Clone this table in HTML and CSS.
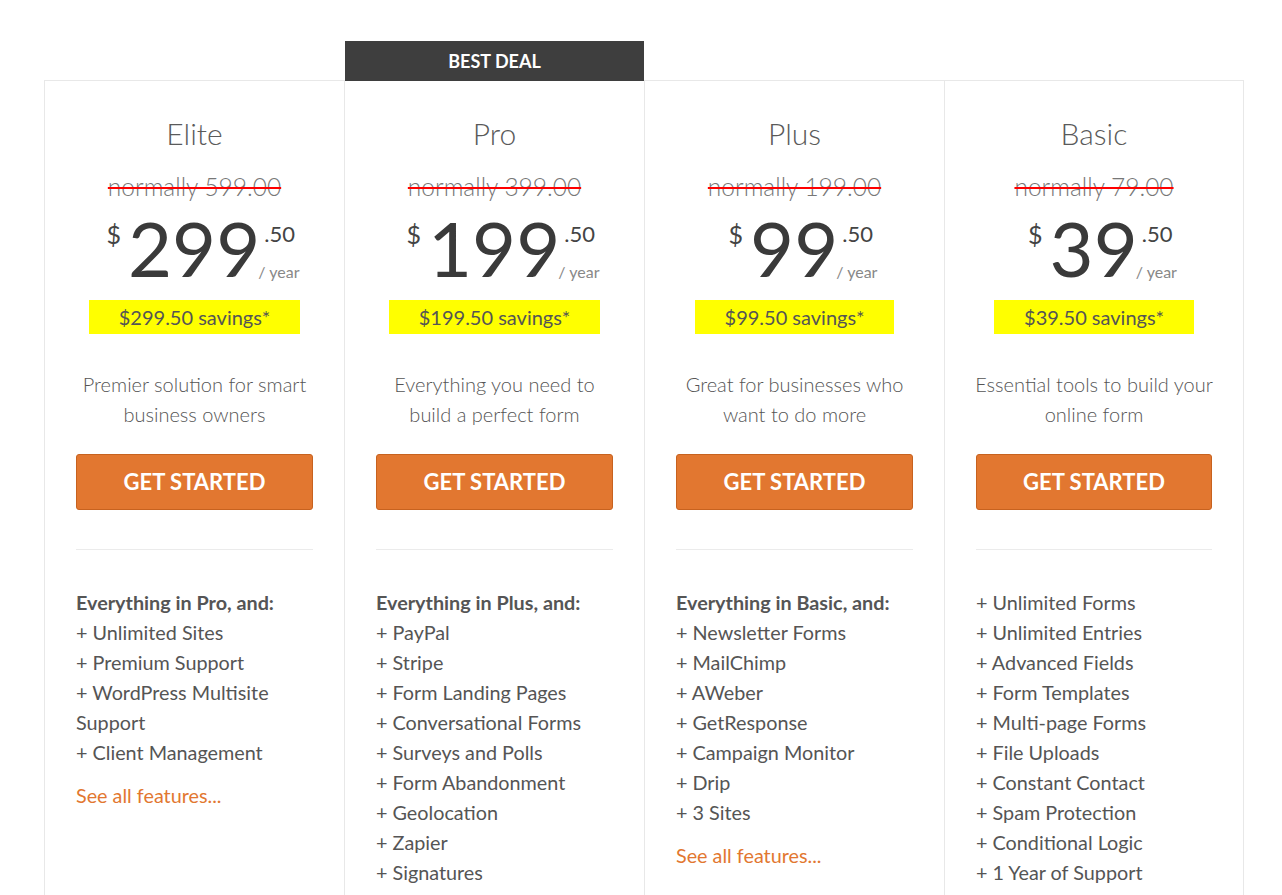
FILE: index.html
```html
<!DOCTYPE html>
<html lang="en">
<head>
<meta charset="utf-8">
<title>Pricing</title>
<link rel="stylesheet" href="styles.css">
</head>
<body>
<div class="page">
  <div class="plans">
    <div class="plan">
      <h2 class="plan-name">Elite</h2>
      <div class="normally"><span class="strike">normally 599.00</span></div>
      <div class="price">
        <span class="currency">$</span>
        <span class="amount">299</span>
        <span class="side"><span class="cents">.50</span><span class="per">/ year</span></span>
      </div>
      <div class="savings-wrap"><span class="savings">$299.50 savings*</span></div>
      <p class="desc">Premier solution for smart business owners</p>
      <a class="btn" href="#">GET STARTED</a>
      <hr class="sep">
      <ul class="features">
        <li class="head">Everything in Pro, and:</li>
        <li>+ Unlimited Sites</li>
        <li>+ Premium Support</li>
        <li>+ WordPress Multisite Support</li>
        <li>+ Client Management</li>
      </ul>
      <a class="more" href="#">See all features...</a>
    </div>
    <div class="plan featured">
      <div class="ribbon">BEST DEAL</div>
      <h2 class="plan-name">Pro</h2>
      <div class="normally"><span class="strike">normally 399.00</span></div>
      <div class="price">
        <span class="currency">$</span>
        <span class="amount">199</span>
        <span class="side"><span class="cents">.50</span><span class="per">/ year</span></span>
      </div>
      <div class="savings-wrap"><span class="savings">$199.50 savings*</span></div>
      <p class="desc">Everything you need to build a perfect form</p>
      <a class="btn" href="#">GET STARTED</a>
      <hr class="sep">
      <ul class="features">
        <li class="head">Everything in Plus, and:</li>
        <li>+ PayPal</li>
        <li>+ Stripe</li>
        <li>+ Form Landing Pages</li>
        <li>+ Conversational Forms</li>
        <li>+ Surveys and Polls</li>
        <li>+ Form Abandonment</li>
        <li>+ Geolocation</li>
        <li>+ Zapier</li>
        <li>+ Signatures</li>
      </ul>
      <a class="more" href="#">See all features...</a>
    </div>
    <div class="plan">
      <h2 class="plan-name">Plus</h2>
      <div class="normally"><span class="strike">normally 199.00</span></div>
      <div class="price">
        <span class="currency">$</span>
        <span class="amount">99</span>
        <span class="side"><span class="cents">.50</span><span class="per">/ year</span></span>
      </div>
      <div class="savings-wrap"><span class="savings">$99.50 savings*</span></div>
      <p class="desc">Great for businesses who want to do more</p>
      <a class="btn" href="#">GET STARTED</a>
      <hr class="sep">
      <ul class="features">
        <li class="head">Everything in Basic, and:</li>
        <li>+ Newsletter Forms</li>
        <li>+ MailChimp</li>
        <li>+ AWeber</li>
        <li>+ GetResponse</li>
        <li>+ Campaign Monitor</li>
        <li>+ Drip</li>
        <li>+ 3 Sites</li>
      </ul>
      <a class="more" href="#">See all features...</a>
    </div>
    <div class="plan">
      <h2 class="plan-name">Basic</h2>
      <div class="normally"><span class="strike">normally 79.00</span></div>
      <div class="price">
        <span class="currency">$</span>
        <span class="amount">39</span>
        <span class="side"><span class="cents">.50</span><span class="per">/ year</span></span>
      </div>
      <div class="savings-wrap"><span class="savings">$39.50 savings*</span></div>
      <p class="desc">Essential tools to build your online form</p>
      <a class="btn" href="#">GET STARTED</a>
      <hr class="sep">
      <ul class="features">
        <li>+ Unlimited Forms</li>
        <li>+ Unlimited Entries</li>
        <li>+ Advanced Fields</li>
        <li>+ Form Templates</li>
        <li>+ Multi-page Forms</li>
        <li>+ File Uploads</li>
        <li>+ Constant Contact</li>
        <li>+ Spam Protection</li>
        <li>+ Conditional Logic</li>
        <li>+ 1 Year of Support</li>
      </ul>
      <a class="more" href="#">See all features...</a>
    </div>
  </div>
</div>
</body>
</html>
```
FILE: styles.css
```css
* { box-sizing: border-box; }
html, body { margin: 0; padding: 0; background: #fff; }
body {
  font-family: Lato, "Open Sans", "Liberation Sans", sans-serif;
  color: #555;
}
.page {
  padding: 80px 0 0 44px;
}
.plans {
  display: grid;
  grid-template-columns: repeat(4, 300px);
  width: 1200px;
  border-top: 1px solid #e8e8e8;
}
.plan {
  position: relative;
  border-left: 1px solid #e8e8e8;
  padding: 34px 31px 60px 31px;
}
.plan:last-child { border-right: 1px solid #e8e8e8; }
.ribbon {
  position: absolute;
  top: -40px;
  left: 0;
  right: 0;
  height: 40px;
  line-height: 40px;
  background: #3e3e3e;
  color: #fff;
  font-weight: 700;
  font-size: 18px;
  text-align: center;
}
.plan-name {
  margin: 0;
  font-weight: 300;
  font-size: 30px;
  line-height: 36px;
  color: #5a5a5a;
  text-align: center;
}
.normally {
  margin-top: 21px;
  text-align: center;
  font-size: 24.5px;
  line-height: 30px;
  font-weight: 300;
  color: #777;
}
.strike {
  text-decoration: line-through;
  text-decoration-color: #f00;
  text-decoration-thickness: 2px;
}
.price {
  margin-top: 8px;
  display: flex;
  justify-content: center;
  padding-left: 17px;
  height: 76px;
  color: #444;
}
.currency {
  font-size: 25px;
  line-height: 30px;
  font-weight: 400;
  margin-top: 9px;
  margin-right: 7px;
}
.amount {
  font-size: 76px;
  line-height: 76px;
  font-weight: 400;
  color: #3a3a3a;
}
.side {
  display: flex;
  flex-direction: column;
  justify-content: space-between;
  padding: 11px 0 5px 0;
  margin-left: -2px;
}
.cents {
  font-size: 22px;
  line-height: 26px;
  font-weight: 400;
  padding-left: 6px;
}
.per {
  font-size: 16px;
  line-height: 18px;
  font-weight: 400;
  color: #888;
}
.savings-wrap {
  margin-top: 14px;
  text-align: center;
}
.savings {
  display: inline-block;
  background: #ffff00;
  padding: 0 30px;
  height: 34px;
  line-height: 34px;
  font-size: 20px;
  color: #555;
}
.desc {
  margin: 35px -4px 0 -4px;
  text-align: center;
  font-size: 20px;
  line-height: 30px;
  font-weight: 300;
  color: #555;
}
.btn {
  display: block;
  margin-top: 25px;
  height: 56px;
  line-height: 54px;
  background: #e27730;
  border: 1px solid #c7621f;
  border-radius: 3px;
  color: #fff;
  text-decoration: none;
  text-align: center;
  font-weight: 700;
  font-size: 22px;
}
.sep {
  margin: 39px 0 0 0;
  border: 0;
  border-top: 1px solid #ebebeb;
  height: 0;
}
.features {
  list-style: none;
  margin: 37px 0 0 0;
  padding: 0;
  font-size: 19.8px;
  line-height: 30px;
  color: #555;
}
.features .head { font-weight: 700; }
.more {
  display: block;
  margin-top: 13px;
  font-size: 19.8px;
  line-height: 30px;
  color: #e27730;
  text-decoration: none;
}
```
